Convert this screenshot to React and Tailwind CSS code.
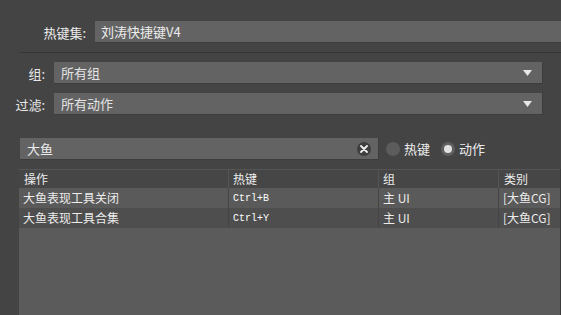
import React from "react";

const font = { fontFamily: '"Noto Sans CJK SC", "Noto Sans", sans-serif' };

function Arrow() {
  return (
    <svg width="9" height="6" viewBox="0 0 9 6" className="absolute right-[10px] top-[8px]">
      <path d="M0 0 H9 L4.5 6 Z" fill="#e6e6e6" />
    </svg>
  );
}

function Combo({ label, value }) {
  return (
    <div className="flex items-center h-[22px]">
      <div className="w-[45px] text-right text-[13px] text-[#e8e8e8] leading-none">{label}</div>
      <div className="relative ml-[9px] w-[489px] h-[22px] bg-[#636363] border-r border-b border-[#3d3d3d] flex items-center pl-[7px] text-[13px] text-[#e4e4e4]">
        {value}
        <Arrow />
      </div>
    </div>
  );
}

export default function App() {
  const rows = [
    ["大鱼表现工具关闭", "Ctrl+B", "主 UI", "[大鱼CG]", "bg-[#5a5a5a]"],
    ["大鱼表现工具合集", "Ctrl+Y", "主 UI", "[大鱼CG]", "bg-[#4e4e4e]"],
  ];
  return (
    <div className="w-[561px] h-[315px] bg-[#444444] overflow-hidden flex flex-col" style={font}>
      <div className="flex items-center h-[22px] mt-[21px]">
        <div className="w-[86px] text-right text-[13px] text-[#ececec] leading-none">热键集:</div>
        <div className="ml-[9px] flex-1 h-[22px] bg-[#636363] border-b border-[#3d3d3d] flex items-center pl-[6px] text-[13px] text-[#ececec]">
          刘涛快捷键V4
        </div>
      </div>
      <div className="ml-[19px] mt-[9px] h-px bg-[#363636]" />
      <div className="mt-[9px]">
        <Combo label="组:" value="所有组" />
      </div>
      <div className="mt-[9px]">
        <Combo label="过滤:" value="所有动作" />
      </div>
      <div className="mt-[23px] flex items-center h-[22px]">
        <div className="relative ml-[20px] w-[359px] h-[22px] bg-[#636363] border-r border-b border-[#3d3d3d] flex items-center pl-[7px] text-[13px] text-[#ececec]">
          大鱼
          <div className="absolute left-[337px] top-[4px] w-[14px] h-[14px] rounded-full bg-[#3e3e3e] flex items-center justify-center">
            <svg width="8" height="8" viewBox="0 0 8 8">
              <path d="M1 1 L7 7 M7 1 L1 7" stroke="#f0f0f0" strokeWidth="1.8" strokeLinecap="round" />
            </svg>
          </div>
        </div>
        <div className="ml-[7px] w-[14px] h-[14px] rounded-full bg-[#5c5c5c]" />
        <div className="ml-[4px] text-[13px] text-[#ececec]">热键</div>
        <div className="ml-[11px] w-[14px] h-[14px] rounded-full bg-[#5f5f5f] flex items-center justify-center">
          <div className="w-[8px] h-[8px] rounded-full bg-[#e2e2e2]" />
        </div>
        <div className="ml-[4px] text-[13px] text-[#ececec]">动作</div>
      </div>
      <div className="mt-[9px] ml-[19px] flex-1 bg-[#5b5b5b] border-r border-[#3a3a3a] text-[12px] text-[#ececec]">
        <div className="flex h-[19px] bg-[#464646] border-t border-[#555555]">
          <div className="w-[210px] pl-[5px] border-r border-[#555555] flex items-center">操作</div>
          <div className="w-[150px] pl-[4px] border-r border-[#555555] flex items-center">热键</div>
          <div className="w-[120px] pl-[4px] border-r border-[#555555] flex items-center">组</div>
          <div className="flex-1 pl-[5px] flex items-center">类别</div>
        </div>
        {rows.map((r, i) => (
          <div key={i} className={`flex h-[20px] ${r[4]}`}>
            <div className="w-[210px] pl-[4px] border-r border-[#444444] flex items-center">{r[0]}</div>
            <div className="w-[150px] pl-[4px] border-r border-[#444444] flex items-center text-[10px] text-white" style={{ fontFamily: '"Liberation Mono", monospace' }}>{r[1]}</div>
            <div className="w-[120px] pl-[4px] border-r border-[#444444] flex items-center">{r[2]}</div>
            <div className="flex-1 pl-[4px] flex items-center">{r[3]}</div>
          </div>
        ))}
      </div>
    </div>
  );
}
